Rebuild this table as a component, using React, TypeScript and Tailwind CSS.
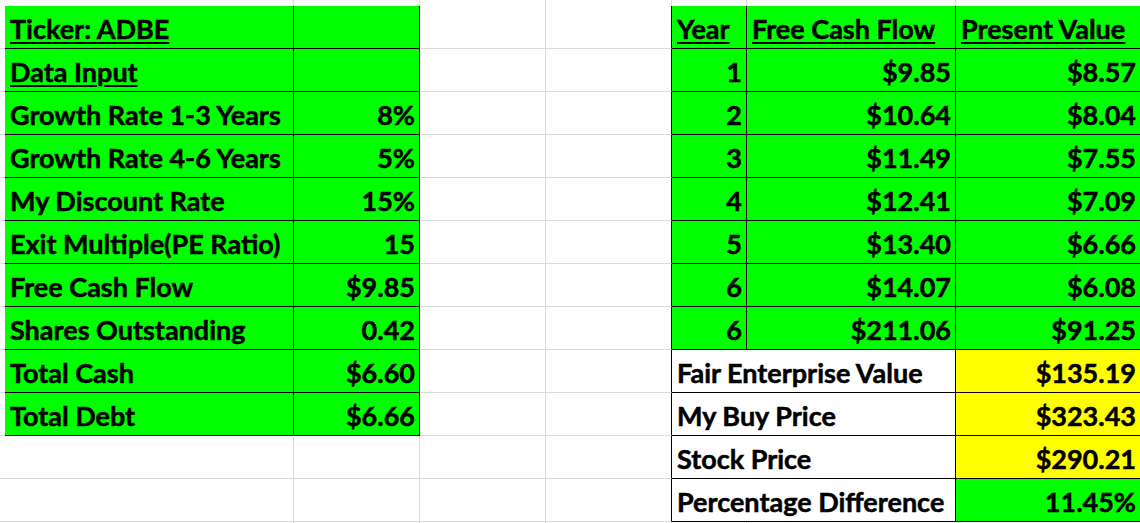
import React from "react";
import clsx from "clsx";

type C = {
  t?: string;
  bg?: string;
  r?: boolean;
  b?: boolean;
  right?: boolean;
  u?: boolean;
  span?: boolean;
};

const GREEN = "bg-[#00ff00]";
const YELLOW = "bg-[#ffff00]";

const leftRows: [string, string, boolean][] = [
  ["Ticker: ADBE", "", true],
  ["Data Input", "", true],
  ["Growth Rate 1-3 Years", "8%", false],
  ["Growth Rate 4-6 Years", "5%", false],
  ["My Discount Rate", "15%", false],
  ["Exit Multiple(PE Ratio)", "15", false],
  ["Free Cash Flow", "$9.85", false],
  ["Shares Outstanding", "0.42", false],
  ["Total Cash", "$6.60", false],
  ["Total Debt", "$6.66", false],
];

const yearRows: [string, string, string][] = [
  ["1", "$9.85", "$8.57"],
  ["2", "$10.64", "$8.04"],
  ["3", "$11.49", "$7.55"],
  ["4", "$12.41", "$7.09"],
  ["5", "$13.40", "$6.66"],
  ["6", "$14.07", "$6.08"],
  ["6", "$211.06", "$91.25"],
];

const summaryRows: [string, string, string][] = [
  ["Fair Enterprise Value", "$135.19", YELLOW],
  ["My Buy Price", "$323.43", YELLOW],
  ["Stock Price", "$290.21", YELLOW],
  ["Percentage Difference", "11.45%", GREEN],
];

function Cell({ c }: { c: C }) {
  return (
    <div
      className={clsx(
        "flex items-end overflow-hidden whitespace-nowrap border-r border-b pl-[5px] pr-[4px] pb-[6px]",
        c.r ? "border-r-black" : "border-r-[#dadada]",
        c.b ? "border-b-black" : "border-b-[#dadada]",
        c.bg ?? "bg-white",
        c.right ? "justify-end" : "justify-start",
        c.span && "col-span-2"
      )}
    >
      {c.t ? (
        <span className={clsx(c.u && "underline decoration-2 underline-offset-[3px]")}>{c.t}</span>
      ) : null}
    </div>
  );
}

function buildRow(r: number): C[] {
  const cells: C[] = [];
  cells.push({ r: r >= 1 && r <= 10 });
  if (r >= 1 && r <= 10) {
    const [label, val, u] = leftRows[r - 1];
    cells.push({ t: label, u, bg: GREEN, r: true, b: true });
    cells.push({ t: val, right: true, bg: GREEN, r: true, b: true });
  } else {
    cells.push({ b: r === 0 });
    cells.push({ b: r === 0 });
  }
  cells.push({});
  cells.push({ r: r >= 1 && r <= 12 });
  if (r === 1) {
    cells.push({ t: "Year", u: true, bg: GREEN, r: true, b: true });
    cells.push({ t: "Free Cash Flow", u: true, bg: GREEN, r: true, b: true });
    cells.push({ t: "Present Value", u: true, bg: GREEN, r: true, b: true });
  } else if (r >= 2 && r <= 8) {
    const [y, f, p] = yearRows[r - 2];
    cells.push({ t: y, right: true, bg: GREEN, r: true, b: true });
    cells.push({ t: f, right: true, bg: GREEN, r: true, b: true });
    cells.push({ t: p, right: true, bg: GREEN, r: true, b: true });
  } else if (r >= 9 && r <= 12) {
    const [label, val, bg] = summaryRows[r - 9];
    cells.push({ t: label, span: true, bg: "bg-white", r: true, b: true });
    cells.push({ t: val, right: true, bg, r: true, b: true });
  } else {
    cells.push({ b: r === 0 });
    cells.push({ b: r === 0 });
    cells.push({ b: r === 0 });
  }
  return cells;
}

export default function App() {
  const rows = Array.from({ length: 14 }, (_, r) => buildRow(r));
  return (
    <div className="w-[1140px] h-[523px] overflow-hidden bg-white">
      <div
        className="grid grid-cols-[5px_289px_126px_126px_126px_75px_209px_185px] grid-rows-[6px_repeat(13,43px)] text-[27px] font-bold leading-none text-black [-webkit-text-stroke:0.5px_black]"
        style={{ fontFamily: "Lato, 'Open Sans', sans-serif" }}
      >
        {rows.map((row, r) =>
          row.map((c, i) => <Cell key={`${r}-${i}`} c={c} />)
        )}
      </div>
    </div>
  );
}
